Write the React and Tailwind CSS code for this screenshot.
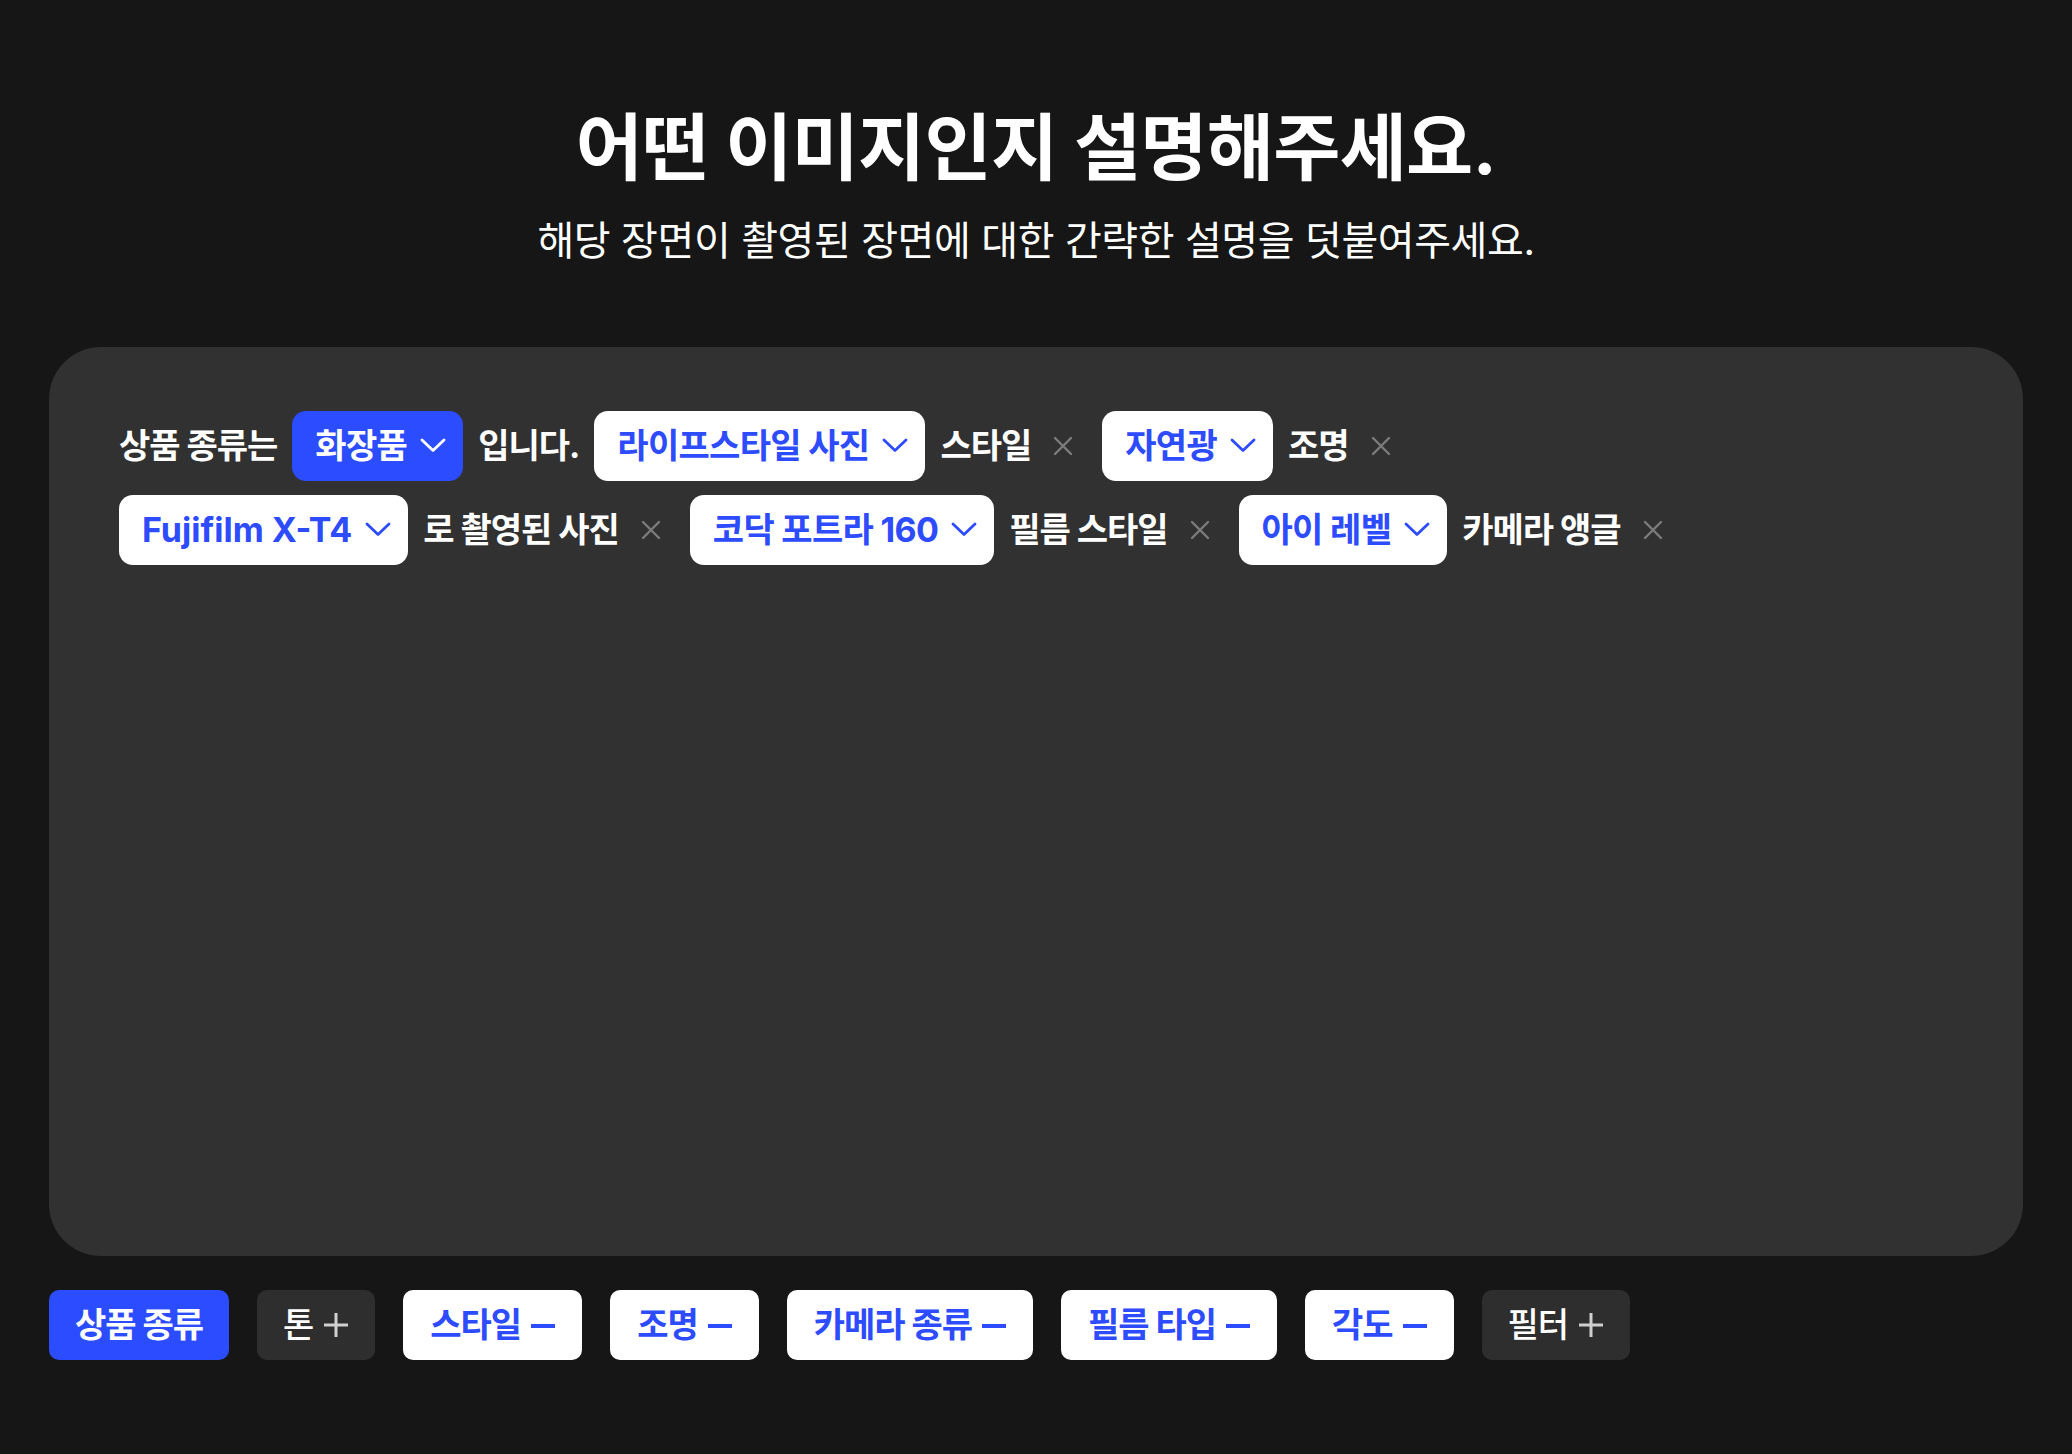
const Chevron = () => (
    <svg width="26" height="15" viewBox="0 0 26 15" fill="none" className="shrink-0">
        <polyline points="2,2 13,12.5 24,2" stroke="currentColor" strokeWidth="2.8" strokeLinecap="round" strokeLinejoin="round" />
    </svg>
);

const Cross = () => (
    <svg width="20" height="20" viewBox="0 0 20 20" fill="none">
        <path d="M2 2 L18 18 M18 2 L2 18" stroke="#7c7c7c" strokeWidth="2.4" strokeLinecap="round" />
    </svg>
);

const Plus = () => (
    <svg width="26" height="26" viewBox="0 0 26 26" fill="none" className="shrink-0">
        <path d="M13 1 V25 M1 13 H25" stroke="#cfcfcf" strokeWidth="3" />
    </svg>
);

const Minus = () => (
    <svg width="24" height="26" viewBox="0 0 24 26" fill="none" className="shrink-0">
        <path d="M0 14 H24" stroke="currentColor" strokeWidth="4" />
    </svg>
);

const Select = ({ label, active = false, latin = false }) => (
    <button
        className={`h-[70px] rounded-[14px] pl-[23px] pr-[17px] flex items-center gap-[13px] font-bold text-[34px] whitespace-nowrap ${
            latin ? 'tracking-normal' : 'tracking-[-0.02em]'
        } ${active ? 'bg-[#2c4dff] text-white' : 'bg-white text-[#2d4bff]'}`}
    >
        <span>{label}</span>
        <Chevron />
    </button>
);

const Label = ({ children }) => (
    <span className="text-white font-bold text-[34px] tracking-[-0.03em] whitespace-nowrap">{children}</span>
);

const Remove = () => (
    <button className="pl-[7px] pr-[14px] h-[70px] flex items-center">
        <Cross />
    </button>
);

const Tag = ({ label, state }) => {
    if (state === 'active') {
        return (
            <button className="h-[70px] rounded-[10px] px-[26px] bg-[#2c4dff] text-white font-bold text-[34px] tracking-[-0.03em] whitespace-nowrap">
                {label}
            </button>
        );
    }
    if (state === 'on') {
        return (
            <button className="h-[70px] rounded-[10px] px-[27px] bg-white text-[#2d4bff] font-bold text-[34px] tracking-[-0.03em] whitespace-nowrap flex items-center gap-[10px]">
                <span>{label}</span>
                <Minus />
            </button>
        );
    }
    return (
        <button className="h-[70px] rounded-[10px] px-[26px] bg-[#2e2e2e] text-white font-medium text-[34px] tracking-[-0.03em] whitespace-nowrap flex items-center gap-[10px]">
            <span>{label}</span>
            <Plus />
        </button>
    );
};

const tags = [
    { label: '상품 종류', state: 'active' },
    { label: '톤', state: 'off' },
    { label: '스타일', state: 'on' },
    { label: '조명', state: 'on' },
    { label: '카메라 종류', state: 'on' },
    { label: '필름 타입', state: 'on' },
    { label: '각도', state: 'on' },
    { label: '필터', state: 'off' },
];

export default function App() {
    return (
        <div className="min-h-screen bg-[#161616] font-['Inter','Noto_Sans_CJK_KR',sans-serif] pb-[90px]">
            {/* 헤더 */}
            <div className="flex flex-col items-center pt-[104px]">
                <h1 className="text-white font-bold text-[73px] leading-[1.2] tracking-[-0.01em]">
                    어떤 이미지인지 설명해주세요.
                </h1>
                <p className="mt-[23px] text-white text-[40px] leading-[1.3] tracking-[-0.01em]">
                    해당 장면이 촬영된 장면에 대한 간략한 설명을 덧붙여주세요.
                </p>
            </div>

            {/* 프롬프트 패널 */}
            <div className="mx-[49px] mt-[80px] h-[909px] rounded-[52px] bg-[#313131] pt-[64px] px-[70px] flex flex-col gap-[14px]">
                <div className="flex items-center gap-x-[15px]">
                    <Label>상품 종류는</Label>
                    <Select label="화장품" active />
                    <Label>입니다.</Label>
                    <Select label="라이프스타일 사진" />
                    <Label>스타일</Label>
                    <Remove />
                    <Select label="자연광" />
                    <Label>조명</Label>
                    <Remove />
                </div>
                <div className="flex items-center gap-x-[15px]">
                    <Select label="Fujifilm X-T4" latin />
                    <Label>로 촬영된 사진</Label>
                    <Remove />
                    <Select label="코닥 포트라 160" />
                    <Label>필름 스타일</Label>
                    <Remove />
                    <Select label="아이 레벨" />
                    <Label>카메라 앵글</Label>
                    <Remove />
                </div>
            </div>

            {/* 카테고리 태그 */}
            <div className="mx-[49px] mt-[34px] flex items-center gap-[28px]">
                {tags.map((t) => (
                    <Tag key={t.label} label={t.label} state={t.state} />
                ))}
            </div>
        </div>
    );
}
